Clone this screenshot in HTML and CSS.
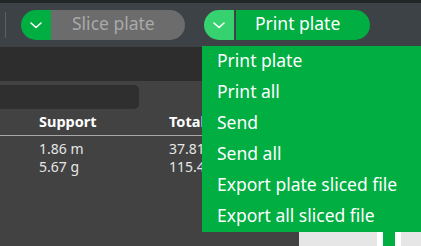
FILE: index.html
```html
<!DOCTYPE html>
<html lang="en">
    <head>
        <meta charset="UTF-8" />
        <meta name="viewport" content="width=device-width, initial-scale=1.0" />
        <title>Slice / Print</title>

        <link rel="stylesheet" href="styles.css">
    </head>
    <body>
        <header class="toolbar">
            <span class="divider"></span>
            <div class="split-btn slice">
                <span class="arrow">
                    <svg width="12" height="7" viewBox="0 0 12 7"><polyline points="1,1 6,5.5 11,1" fill="none" stroke="#fff" stroke-width="1.6" stroke-linecap="round" stroke-linejoin="round"/></svg>
                </span>
                <span class="label">Slice plate</span>
            </div>
            <div class="split-btn print">
                <span class="arrow">
                    <svg width="12" height="7" viewBox="0 0 12 7"><polyline points="1,1 6,5.5 11,1" fill="none" stroke="#fff" stroke-width="1.6" stroke-linecap="round" stroke-linejoin="round"/></svg>
                </span>
                <span class="label">Print plate</span>
            </div>
        </header>

        <main class="workspace">
            <section class="sidebar">
                <div class="sidebar-band"></div>
                <div class="search"></div>
                <table class="stats">
                    <thead>
                        <tr><th></th><th>Support</th><th>Total</th></tr>
                    </thead>
                    <tbody>
                        <tr><td></td><td>1.86 m</td><td>37.81 m</td></tr>
                        <tr><td></td><td>5.67 g</td><td>115.40 g</td></tr>
                    </tbody>
                </table>
            </section>
            <div class="viewport">
                <div class="layer-slider"></div>
            </div>
        </main>

        <ul class="print-menu">
            <li>Print plate</li>
            <li>Print all</li>
            <li>Send</li>
            <li>Send all</li>
            <li>Export plate sliced file</li>
            <li>Export all sliced file</li>
        </ul>
    </body>
</html>
```

FILE: styles.css
```css
body {
    margin: 0;
    height: 100vh;
    display: flex;
    flex-direction: column;
    overflow: hidden;
    font-family: "Noto Sans", "Open Sans", sans-serif;
    background-color: #424242;
}

.toolbar {
    height: 44px;
    flex: none;
    display: flex;
    align-items: center;
    padding-left: 5px;
    border-top: 3px solid #232627;
    background-color: #3c4245;
}

.divider {
    width: 1px;
    height: 26px;
    margin-right: 15px;
    background-color: #5a6064;
}

.split-btn {
    height: 30px;
    display: flex;
    font-size: 17.5px;
}

.split-btn .arrow {
    width: 30px;
    display: flex;
    align-items: center;
    justify-content: center;
    border-radius: 15px 0 0 15px;
}

.split-btn .label {
    flex: 1;
    display: flex;
    align-items: center;
    padding-bottom: 4px;
    box-sizing: border-box;
    border-radius: 0 15px 15px 0;
}

.slice {
    width: 164px;
    margin-right: 19px;
}

.slice .arrow {
    background-color: #00ae42;
}

.slice .label {
    padding-left: 21px;
    background-color: #6c6c6c;
    color: #a9a9a9;
}

.print {
    width: 166px;
}

.print .arrow {
    background-color: #36d26f;
}

.print .label {
    margin-left: 2px;
    padding-left: 19px;
    background-color: #00ae42;
    color: #fff;
}

.workspace {
    flex: 1;
    display: flex;
}

.sidebar {
    width: 299px;
    background-color: #424242;
}

.sidebar-band {
    height: 34px;
    background-color: #2d2d2d;
}

.search {
    width: 139px;
    height: 24px;
    margin-top: 4px;
    border-radius: 0 5px 5px 0;
    background-color: #2f2f2f;
}

.stats {
    width: 100%;
    margin-top: 3px;
    border-collapse: collapse;
    text-align: left;
    color: #e6e6e6;
}

.stats th {
    padding: 0 0 5px 0;
    font-size: 14.5px;
    line-height: 18px;
    font-weight: bold;
    color: #fff;
    border-bottom: 1px solid #a8a8a8;
}

.stats th:first-child {
    width: 39px;
}

.stats th:nth-child(2) {
    width: 130px;
}

.stats td {
    padding: 0;
    font-size: 14px;
    line-height: 18px;
}

.stats tbody tr:first-child td {
    padding-top: 4px;
}

.viewport {
    flex: 1;
    background-color: #e6e6e6;
}

.layer-slider {
    width: 12px;
    height: 100%;
    margin-left: 78px;
    border-left: 6px solid #fff;
    border-right: 6px solid #fff;
    background-color: #00ae42;
}

.print-menu {
    position: absolute;
    top: 46px;
    left: 202px;
    width: 240px;
    margin: 0;
    padding: 0;
    list-style: none;
    background-color: #00ae42;
    color: #fff;
    font-size: 17.5px;
}

.print-menu li {
    height: 31px;
    line-height: 29px;
    padding: 0 0 2px 15px;
    box-sizing: border-box;
    white-space: nowrap;
}
```
